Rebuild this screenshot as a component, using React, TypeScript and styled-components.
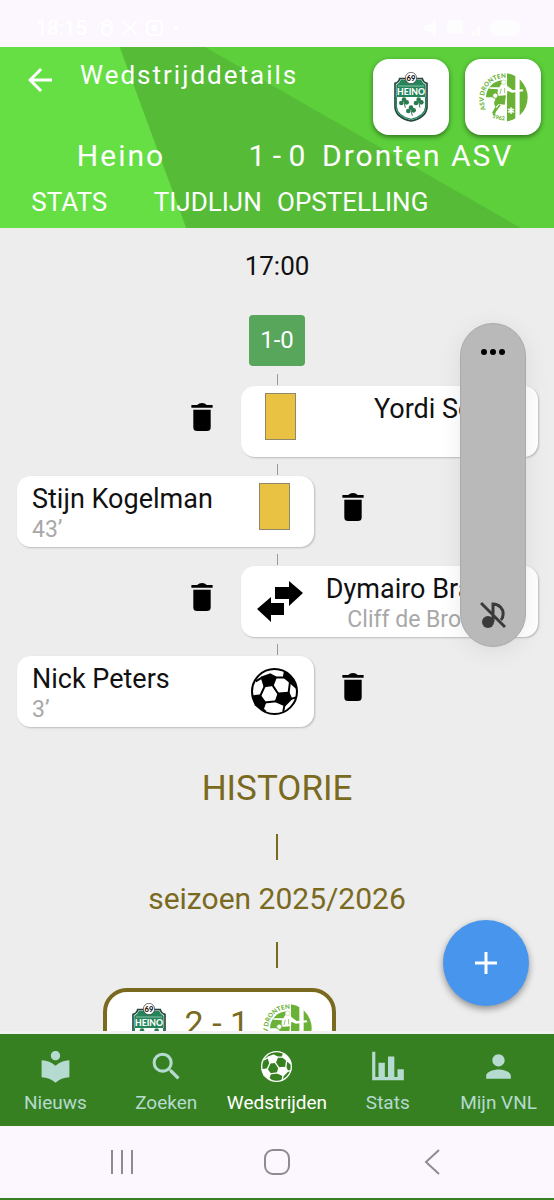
import React from "react";
import styled, { createGlobalStyle } from "styled-components";
import { MdArrowBack, MdLocalLibrary, MdPerson, MdSearch } from "react-icons/md";

const olive = "#7a6a1f";

const GlobalStyle = createGlobalStyle`
  *, *::before, *::after { box-sizing: border-box; }
  body { margin: 0; background: #fcf7fe; font-family: Roboto, "Liberation Sans", sans-serif; }
  button { font: inherit; color: inherit; background: none; border: 0; padding: 0; cursor: pointer; }
  svg { display: block; flex: none; }
  h1, h2, h3, p, ul { margin: 0; padding: 0; font-weight: 400; list-style: none; }
`;

const Screen = styled.div`
  position: relative;
  display: flex;
  flex-direction: column;
  height: 100vh;
`;

const StatusBar = styled.div`
  display: flex;
  justify-content: space-between;
  align-items: center;
  flex: none;
  height: 47px;
  padding: 8px 32px 0 36px;
  color: #fff;
  font-size: 20px;
  font-weight: 500;
`;

const StatusGroup = styled.div`
  display: flex;
  align-items: center;
  gap: 10px;
`;

const Header = styled.header`
  position: relative;
  isolation: isolate;
  flex: none;
  background: #5ccf3b;
  color: #fff;
  padding-bottom: 9px;

  &::before,
  &::after {
    content: "";
    position: absolute;
    inset: 0;
    z-index: -1;
  }
  &::before {
    background: #56bc38;
    clip-path: polygon(0 0, 37% 0, 94% 100%, 0 100%);
  }
  &::after {
    background: #66df45;
    clip-path: polygon(0 0, 21.6% 0, 33.6% 100%, 0 100%);
  }
`;

const TitleRow = styled.div`
  display: flex;
  align-items: flex-start;
  padding: 12px 13px 0 19px;
`;

const BackButton = styled.button`
  display: grid;
  place-items: center;
  width: 42px;
  height: 42px;
`;

const PageTitle = styled.h1`
  flex: 1;
  padding-left: 19px;
  font-size: 26px;
  line-height: 32px;
  letter-spacing: 2px;
`;

const Crests = styled.div`
  display: flex;
  gap: 16px;
`;

const CrestTile = styled.div`
  display: grid;
  place-items: center;
  width: 76px;
  height: 76px;
  border-radius: 16px;
  background: #fff;
  box-shadow: 0 2px 5px rgba(0, 0, 0, 0.45);
`;

const ScoreRow = styled.div`
  display: grid;
  grid-template-columns: minmax(0, 1fr) 82px minmax(0, 1fr);
  padding-top: 4px;
  font-size: 30px;
  line-height: 34px;
  letter-spacing: 2px;
  white-space: nowrap;
  text-align: center;
`;

const HomeTeam = styled.span`
  padding-left: 6px;
`;

const AwayTeam = styled.span`
  text-align: left;
  padding-left: 4px;
`;

const MatchScore = styled.span`
  letter-spacing: 0;
`;

const TabRow = styled.nav`
  display: grid;
  grid-template-columns: repeat(4, minmax(0, 1fr));
  margin-top: 12px;
`;

const Tab = styled.a`
  color: #fff;
  text-decoration: none;
  font-size: 26px;
  line-height: 34px;
  text-align: center;
  white-space: nowrap;
`;

const Body = styled.main`
  flex: 1;
  min-height: 0;
  overflow: hidden auto;
  scrollbar-width: none;
  background: #ededed;
  border-bottom: 3px solid #f3f2f3;
`;

const Kickoff = styled.p`
  padding-top: 22px;
  font-size: 26px;
  line-height: 32px;
  text-align: center;
  color: #111;
`;

const ScoreBadge = styled.div`
  width: 56px;
  margin: 33px auto 0;
  border-radius: 4px;
  background: #57a65b;
  color: #fff;
  font-size: 24px;
  line-height: 51px;
  text-align: center;
`;

const Timeline = styled.ul`
  padding: 1px 16px 0 17px;
`;

const Connector = styled.div`
  width: 1px;
  height: 11px;
  margin: 7px auto 1px;
  background: #999;
`;

const EventRow = styled.div<{ $away?: boolean }>`
  display: flex;
  flex-direction: ${(p) => (p.$away ? "row-reverse" : "row")};
  align-items: center;
  gap: 28px;
`;

const EventCard = styled.article<{ $away?: boolean }>`
  display: flex;
  flex-direction: ${(p) => (p.$away ? "row-reverse" : "row")};
  width: 57%;
  min-height: 71px;
  padding: 0 15px;
  border-radius: 14px;
  background: #fff;
  box-shadow: 1px 1px 2px rgba(0, 0, 0, 0.22);
  text-align: ${(p) => (p.$away ? "right" : "left")};
`;

const EventText = styled.div`
  flex: 1;
  min-width: 0;
  padding-top: 8px;
  white-space: nowrap;
`;

const PlayerName = styled.h3`
  font-size: 27px;
  line-height: 30px;
  color: #111;
`;

const EventNote = styled.p`
  font-size: 23px;
  line-height: 32px;
  color: #a8a8a8;
`;

const EventIcon = styled.div`
  display: flex;
  justify-content: center;
  align-items: center;
  width: 48px;
`;

const YellowCard = styled.div`
  align-self: flex-start;
  width: 31px;
  height: 47px;
  margin-top: 7px;
  border: 1px solid #8f8768;
  background: #eac243;
`;

const DeleteButton = styled.button`
  padding-bottom: 10px;
  color: #000;
`;

const History = styled.section`
  color: ${olive};
  text-align: center;
`;

const HistoryTitle = styled.h2`
  padding-top: 41px;
  font-size: 35px;
  line-height: 42px;
`;

const Season = styled.h3`
  font-size: 30px;
  line-height: 38px;
`;

const Bar = styled.div`
  width: 2px;
  height: 26px;
  margin: 24px auto 20px;
  background: ${olive};
`;

const ResultCard = styled.article`
  display: flex;
  align-items: flex-start;
  width: 42%;
  margin-left: 103px;
  padding: 11px 20px 10px 25px;
  border: 4px solid ${olive};
  border-radius: 24px;
  background: #fff;
`;

const Result = styled.span`
  flex: 1;
  padding-left: 6px;
  font-size: 34px;
  line-height: 40px;
`;

const AddButton = styled.button`
  position: absolute;
  right: 25px;
  bottom: 194px;
  display: grid;
  place-items: center;
  width: 86px;
  height: 86px;
  border-radius: 50%;
  background: #4795ec;
  box-shadow: 0 3px 7px rgba(0, 0, 0, 0.4);
`;

const VolumePanel = styled.aside`
  position: absolute;
  top: 323px;
  right: 28px;
  display: flex;
  flex-direction: column;
  justify-content: space-between;
  align-items: center;
  width: 66px;
  height: 324px;
  padding: 25px 0 17px;
  border: 1px solid #aaa;
  border-radius: 33px;
  background: #b9b9b9;
  box-shadow: 0 4px 24px rgba(0, 0, 0, 0.08);
`;

const BottomNav = styled.nav`
  display: grid;
  grid-template-columns: repeat(5, minmax(0, 1fr));
  flex: none;
  padding: 13px 0 11px;
  background: #378021;
`;

const NavLink = styled.a<{ $active?: boolean }>`
  display: flex;
  flex-direction: column;
  align-items: center;
  gap: 6px;
  color: ${(p) => (p.$active ? "#fff" : "#b5dad0")};
  text-decoration: none;
  font-size: 19px;
  line-height: 24px;
  white-space: nowrap;
`;

const NavIcon = styled.span`
  display: grid;
  place-items: center;
  height: 38px;
`;

const SystemNav = styled.div`
  display: grid;
  grid-template-columns: repeat(3, 1fr);
  flex: none;
  height: 74px;
  padding: 0 44px;
  border-bottom: 2px solid #378021;
  color: #8f8a92;
`;

const SystemButton = styled.button`
  display: grid;
  place-items: center;
`;

function Ball({ size }: { size: number }) {
  return (
    <svg width={size} height={size} viewBox="0 0 140 140" fill="none" stroke="currentColor" strokeWidth="6" strokeLinejoin="round">
      <circle cx="70" cy="70" r="67" />
      <g fill="currentColor">
        <path d="M32 28 57 19 74 28 65 51 40 54Z" />
        <path d="M82 76 112 74 120 92 101 111 74 99Z" />
        <path d="M6 84 27 82 42 103 35 123 14 110Z" />
        <path d="M100 14 122 32 134 58 116 42 98 27Z" />
      </g>
      <path d="M73 28H101M64 51 82 78M41 54 27 84M40 103 76 99M112 74 116 42M34 28 14 40M100 109 96 130M34 122 44 130M119 92 134 88" />
    </svg>
  );
}

function HeinoCrest({ height }: { height: number }) {
  return (
    <svg width={(height * 102) / 150} height={height} viewBox="0 0 102 150" role="img" aria-label="Heino">
      <path d="M17 20H85Q88 32 99 34V106Q96 137 51 147Q6 137 3 106V34Q14 32 17 20Z" fill="#fff" stroke="#24463f" strokeWidth="5" />
      <path d="M20 24H82Q86 35 95 38V75H7V38Q16 35 20 24Z" fill="#25845a" />
      <path d="M7 75V105Q10 133 51 142Q92 133 95 105V75" fill="none" stroke="#25845a" strokeWidth="4" />
      <path d="M12 42H90" stroke="#8cc2a8" strokeWidth="3" />
      <text x="51" y="69" textAnchor="middle" fontFamily="Lato, sans-serif" fontWeight="900" fontSize="26" fill="#fff">HEINO</text>
      {[[30, 92], [74, 92], [51, 116]].map(([x, y]) => (
        <g key={`${x}-${y}`} transform={`translate(${x} ${y})`} fill="#2b7a50">
          <circle cx="-8" cy="1" r="7" />
          <circle cx="8" cy="-1" r="7" />
          <circle cx="0" cy="-9" r="7" />
          <path d="M0-2 4 15" stroke="#2b7a50" strokeWidth="3" />
        </g>
      ))}
      <circle cx="51" cy="18" r="17" fill="#fff" stroke="#333" strokeWidth="2" />
      <text x="51" y="26" textAnchor="middle" fontFamily="Lato, sans-serif" fontWeight="900" fontSize="23" fill="#111">69</text>
    </svg>
  );
}

function DrontenCrest({ size, id }: { size: number; id: string }) {
  return (
    <svg width={size} height={size} viewBox="0 0 150 150" role="img" aria-label="ASV Dronten">
      <defs>
        <clipPath id={`${id}-disc`}><circle cx="76" cy="76" r="73" /></clipPath>
        <path id={`${id}-top`} d="M24 112A60 60 0 0 1 18 78A60 60 0 0 1 78 18L110 18" />
        <path id={`${id}-foot`} d="M42 136A72 72 0 0 0 110 136" />
      </defs>
      <g fill="#69b235">
        <g clipPath={`url(#${id}-disc)`}>
          <rect x="87" width="25" height="150" />
          <rect x="125" width="25" height="150" />
        </g>
        <path d="M24 76A52 52 0 0 1 74 25V76Z" />
        <text fontFamily="Lato, sans-serif" fontWeight="900" fontSize="19">
          <textPath href={`#${id}-top`}>ASV DRONTEN</textPath>
        </text>
        <text fontFamily="Lato, sans-serif" fontWeight="900" fontSize="17">
          <textPath href={`#${id}-foot`}>1962</textPath>
        </text>
      </g>
      <path d="M70 36 84 28 88 42 104 54 134 52 136 58 102 62 88 56 86 84 74 88 54 92 60 52 34 50 34 46 64 46Z" fill="#fff" />
      <circle cx="77" cy="31" r="7" fill="#fff" stroke="#b9d9a0" strokeWidth="2" />
      <path d="M56 72 84 70 80 98 62 96 52 106 48 92Z" fill="#69b235" />
      <circle cx="52" cy="71" r="8" fill="#fff" stroke="#69b235" strokeWidth="3" />
      <path d="M70 50 66 66M80 48 80 64" stroke="#69b235" strokeWidth="2" />
      <path d="M54 106 44 124M66 98 52 118 46 130" fill="none" stroke="#69b235" strokeWidth="5" />
      <path d="M99 108V124M92 112 106 120M106 112 92 120" stroke="#fff" strokeWidth="5" strokeLinecap="round" />
    </svg>
  );
}

function Trash() {
  return (
    <svg width="22" height="28" viewBox="0 0 22 29">
      <path d="M0 2H6Q8 0 11 0T16 2H22V5H0ZM2 7H20V25Q20 29 16 29H6Q2 29 2 25Z" fill="currentColor" />
    </svg>
  );
}

function Swap() {
  return (
    <svg width="46" height="42" viewBox="0 0 46 42">
      <path d="M18 6H32V0L46 12 32 25V18H18ZM27 22V34H14V41L0 28 14 16V22Z" fill="#000" />
    </svg>
  );
}

const eventIcons = {
  yellow: <YellowCard />,
  swap: <Swap />,
  goal: <Ball size={47} />,
};

const events: { player: string; note?: string; kind: keyof typeof eventIcons; away?: boolean }[] = [
  { player: "Yordi Schols", kind: "yellow", away: true },
  { player: "Stijn Kogelman", note: "43’", kind: "yellow" },
  { player: "Dymairo Brandis", note: "Cliff de Brouwere", kind: "swap", away: true },
  { player: "Nick Peters", note: "3’", kind: "goal" },
];

const navItems = [
  { label: "Nieuws", icon: <MdLocalLibrary size={37} /> },
  { label: "Zoeken", icon: <MdSearch size={37} /> },
  { label: "Wedstrijden", icon: <Ball size={31} />, active: true },
  {
    label: "Stats",
    icon: (
      <svg width="38" height="38" viewBox="0 0 24 24" fill="currentColor">
        <path d="M22 21H2V3H4V19H6V10H10V19H12V6H16V19H18V14H22Z" />
      </svg>
    ),
  },
  { label: "Mijn VNL", icon: <MdPerson size={37} /> },
];

export default function App() {
  return (
    <Screen>
      <GlobalStyle />
      <StatusBar>
        <StatusGroup>
          <span>18:15</span>
          <svg width="86" height="18" viewBox="0 0 86 18" fill="none" stroke="#fff" strokeWidth="2">
            <circle cx="10" cy="11" r="5" />
            <path d="M4 5 10 1 16 5M26 2 40 16M40 2 26 16" />
            <rect x="50" y="2" width="15" height="14" rx="4" />
            <circle cx="57" cy="9" r="2" />
            <circle cx="79" cy="9" r="1" />
          </svg>
        </StatusGroup>
        <svg width="100" height="20" viewBox="0 0 100 20" fill="#fff" opacity="0.8">
          <path d="M2 7H7L14 1V19L7 13H2Z" />
          <rect x="25" y="2" width="16" height="13" rx="3" />
          <path d="M50 14H53V18H50ZM55 8H58V18H55Z" />
          <rect x="68" y="2" width="30" height="16" rx="8" />
        </svg>
      </StatusBar>

      <Header>
        <TitleRow>
          <BackButton aria-label="Terug"><MdArrowBack size={36} /></BackButton>
          <PageTitle>Wedstrijddetails</PageTitle>
          <Crests>
            <CrestTile><HeinoCrest height={50} /></CrestTile>
            <CrestTile><DrontenCrest size={50} id="tile" /></CrestTile>
          </Crests>
        </TitleRow>
        <ScoreRow>
          <HomeTeam>Heino</HomeTeam>
          <MatchScore>1 - 0</MatchScore>
          <AwayTeam>Dronten ASV</AwayTeam>
        </ScoreRow>
        <TabRow>
          <Tab href="#stats">STATS</Tab>
          <Tab href="#tijdlijn">TIJDLIJN</Tab>
          <Tab href="#opstelling">OPSTELLING</Tab>
        </TabRow>
      </Header>

      <Body>
        <Kickoff>17:00</Kickoff>
        <ScoreBadge>1-0</ScoreBadge>
        <Timeline>
          {events.map((e) => (
            <li key={e.player}>
              <Connector />
              <EventRow $away={e.away}>
                <EventCard $away={e.away}>
                  <EventText>
                    <PlayerName>{e.player}</PlayerName>
                    {e.note && <EventNote>{e.note}</EventNote>}
                  </EventText>
                  <EventIcon>{eventIcons[e.kind]}</EventIcon>
                </EventCard>
                <DeleteButton aria-label="Verwijderen"><Trash /></DeleteButton>
              </EventRow>
            </li>
          ))}
        </Timeline>
        <History>
          <HistoryTitle>HISTORIE</HistoryTitle>
          <Bar />
          <Season>seizoen 2025/2026</Season>
          <Bar />
          <ResultCard>
            <HeinoCrest height={50} />
            <Result>2 - 1</Result>
            <DrontenCrest size={50} id="result" />
          </ResultCard>
        </History>
      </Body>

      <BottomNav>
        {navItems.map((n) => (
          <NavLink key={n.label} href={`#${n.label}`} $active={n.active}>
            <NavIcon>{n.icon}</NavIcon>
            {n.label}
          </NavLink>
        ))}
      </BottomNav>
      <SystemNav>
        <SystemButton aria-label="Recente apps">
          <svg width="24" height="24" viewBox="0 0 24 24" stroke="currentColor" strokeWidth="2"><path d="M2 0V24M12 0V24M22 0V24" /></svg>
        </SystemButton>
        <SystemButton aria-label="Startscherm">
          <svg width="26" height="26" viewBox="0 0 26 26" fill="none" stroke="currentColor" strokeWidth="2"><rect x="1" y="1" width="24" height="24" rx="8" /></svg>
        </SystemButton>
        <SystemButton aria-label="Vorige">
          <svg width="16" height="26" viewBox="0 0 16 26" fill="none" stroke="currentColor" strokeWidth="2"><path d="M15 1 2 13 15 25" /></svg>
        </SystemButton>
      </SystemNav>

      <AddButton aria-label="Toevoegen">
        <svg width="22" height="22" viewBox="0 0 22 22" stroke="#fff" strokeWidth="3"><path d="M11 0V22M0 11H22" /></svg>
      </AddButton>

      <VolumePanel>
        <svg width="24" height="6" viewBox="0 0 24 6"><circle cx="3" cy="3" r="3" /><circle cx="12" cy="3" r="3" /><circle cx="21" cy="3" r="3" /></svg>
        <svg width="26" height="28" viewBox="0 0 26 28" fill="none" stroke="#3a3a3a" strokeWidth="3">
          <circle cx="8" cy="21" r="6" fill="#3a3a3a" stroke="none" />
          <path d="M13 21V3C19 3 24 8 23 14Q23 17 21 19M1 2 25 26" />
        </svg>
      </VolumePanel>
    </Screen>
  );
}
